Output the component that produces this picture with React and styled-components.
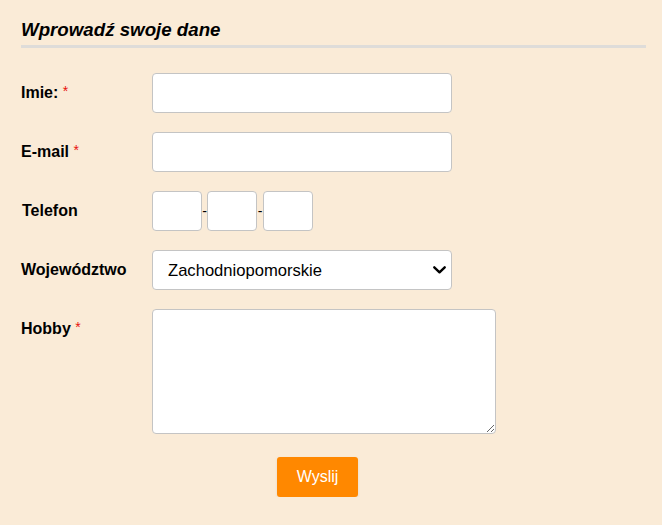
import React from "react";
import styled, { createGlobalStyle } from "styled-components";

const Global = createGlobalStyle`
  html, body { margin: 0; padding: 0; background: #faebd7; }
  body { font-family: "Liberation Sans", Arial, sans-serif; color: #000; }
`;

const Form = styled.form`
  width: 625px;
  margin-left: 21px;
  padding-top: 19px;
`;

const Heading = styled.h3`
  margin: 0 0 25px 0;
  font-size: 18.72px;
  line-height: 22px;
  font-weight: bold;
  font-style: italic;
  padding-bottom: 4px;
  border-bottom: 3px solid #dedcd9;
`;

const Row = styled.div`
  display: grid;
  grid-template-columns: 131px auto;
  align-items: start;
  margin-bottom: 19px;
`;

const Label = styled.label`
  display: block;
  height: 40px;
  font-size: 16px;
  font-weight: bold;
  line-height: 39px;
  padding-left: ${(p) => p.$shift || 0}px;
`;

const Req = styled.span`
  color: #e8120c;
  font-weight: normal;
  font-size: 14px;
  position: relative;
  top: -2px;
`;

const Field = styled.input`
  box-sizing: border-box;
  width: ${(p) => p.$w || 300}px;
  height: 40px;
  background: #fff;
  border: 1px solid #c4c4c4;
  border-radius: 4px;
  font-family: inherit;
  font-size: 16px;
  padding: 0 12px;
  outline: none;
  display: block;
`;

const Phone = styled.div`
  display: flex;
  align-items: center;
  height: 40px;
`;

const Dash = styled.span`
  font-size: 14px;
  line-height: 40px;
  width: ${(p) => p.$w}px;
  text-align: center;
`;

const chevron =
  "url(\"data:image/svg+xml,%3Csvg xmlns='http://www.w3.org/2000/svg' width='13' height='8' viewBox='0 0 13 8'%3E%3Cpath d='M1.3 1.3 L6.5 6.3 L11.7 1.3' fill='none' stroke='%23000' stroke-width='2.4' stroke-linecap='round' stroke-linejoin='round'/%3E%3C/svg%3E\")";

const Select = styled.select`
  box-sizing: border-box;
  appearance: none;
  -webkit-appearance: none;
  width: 300px;
  height: 40px;
  background: #fff ${chevron} no-repeat right 5px center;
  border: 1px solid #c4c4c4;
  border-radius: 4px;
  font-family: inherit;
  font-size: 16.6px;
  color: #000;
  padding: 0 28px 0 15px;
  outline: none;
  display: block;
`;

const Area = styled.textarea`
  box-sizing: border-box;
  width: 344px;
  height: 125px;
  background: #fff;
  border: 1px solid #c4c4c4;
  border-radius: 4px;
  font-family: inherit;
  font-size: 16px;
  outline: none;
  display: block;
`;

const Submit = styled.button`
  display: block;
  margin-left: 256px;
  margin-top: 23px;
  width: 81px;
  height: 40px;
  border: none;
  border-radius: 3px;
  background: #ff8800;
  color: #fff;
  font-family: inherit;
  font-size: 16px;
  box-shadow: 0 1px 3px rgba(0,0,0,0.08);
  cursor: pointer;
`;

export default function App() {
  return (
    <>
      <Global />
      <Form onSubmit={(e) => e.preventDefault()}>
        <Heading>Wprowadź swoje dane</Heading>
        <Row>
          <Label>Imie: <Req>*</Req></Label>
          <Field type="text" />
        </Row>
        <Row>
          <Label>E-mail <Req>*</Req></Label>
          <Field type="email" />
        </Row>
        <Row>
          <Label $shift={1}>Telefon</Label>
          <Phone>
            <Field $w={50} type="text" />
            <Dash $w={5}>-</Dash>
            <Field $w={50} type="text" />
            <Dash $w={6}>-</Dash>
            <Field $w={50} type="text" />
          </Phone>
        </Row>
        <Row>
          <Label>Województwo</Label>
          <Select defaultValue="zp">
            <option value="zp">Zachodniopomorskie</option>
            <option value="pm">Pomorskie</option>
          </Select>
        </Row>
        <Row>
          <Label>Hobby <Req>*</Req></Label>
          <Area />
        </Row>
        <Submit type="submit">Wyslij</Submit>
      </Form>
    </>
  );
}
